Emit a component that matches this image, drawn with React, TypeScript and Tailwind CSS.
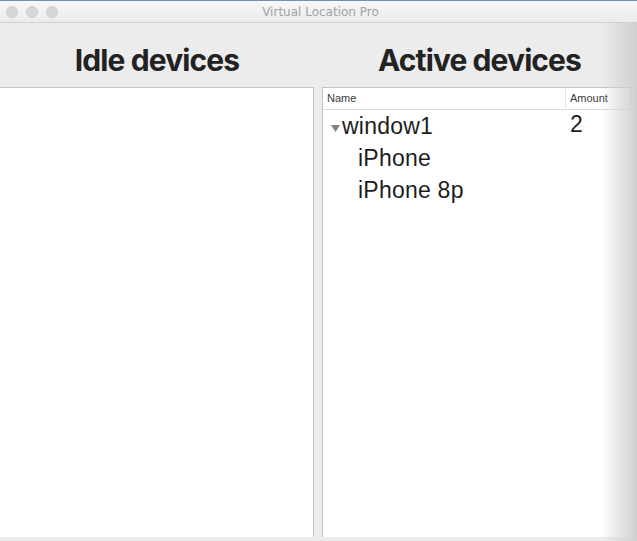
import React from "react"

const rows = [
  { name: "window1", amount: "2", level: 0, open: true },
  { name: "iPhone", amount: "", level: 1 },
  { name: "iPhone 8p", amount: "", level: 1 },
]

function TrafficLight() {
  return <span className="h-[12px] w-[12px] rounded-full bg-[#d6d6d6] border border-[#cdcdcd]" />
}

export default function App() {
  return (
    <div className="relative w-[637px] h-[541px] overflow-hidden bg-[#ececec] font-['Inter',sans-serif]">
      {/* title bar */}
      <div className="relative h-[23px] border-t border-[#7d8fa6] border-b border-b-[#d1d1d1] bg-gradient-to-b from-[#f7f7f7] to-[#ebebeb] flex items-center">
        <div className="flex items-center gap-[8px] pl-[6px]">
          <TrafficLight />
          <TrafficLight />
          <TrafficLight />
        </div>
        <div className="absolute inset-x-0 text-center text-[12px] text-[#a3a3a3] font-['DejaVu_Sans',sans-serif] pl-[4px]">
          Virtual Location Pro
        </div>
      </div>

      <div className="flex h-[514px]">
        {/* idle */}
        <div className="w-[314px] flex flex-col">
          <div className="h-[64px] flex items-center justify-center pt-[10px]">
            <h2 className="text-[30px] font-bold tracking-[-0.03em] text-[#222]">Idle devices</h2>
          </div>
          <div className="h-[450px] bg-white border-t border-r border-[#c3c3c3]" />
        </div>

        <div className="w-[8px]" />

        {/* active */}
        <div className="flex-1 flex flex-col">
          <div className="h-[64px] flex items-center justify-center pt-[10px]">
            <h2 className="text-[30px] font-bold tracking-[-0.03em] text-[#222]">Active devices</h2>
          </div>
          <div className="h-[450px] bg-white border-t border-l border-[#c3c3c3] font-['Liberation_Sans',sans-serif]">
            <div className="flex h-[22px] border-b border-[#dcdcdc] text-[11px] text-[#3a3a3a]">
              <div className="w-[243px] flex items-center pl-[4px] border-r border-[#e2e2e2]">Name</div>
              <div className="w-[66px] flex items-center pl-[4px] border-r border-[#e2e2e2]">Amount</div>
            </div>
            <div className="pt-[3px]">
              {rows.map((r) => (
                <div key={r.name} className="flex h-[32px] text-[23px] text-[#1d1d1d]">
                  <div className={`w-[244px] flex items-start ${r.level ? "pl-[35px]" : "pl-[8px]"}`}>
                    {r.open && (
                      <svg width="9" height="7" viewBox="0 0 9 7" className="mt-[12px] mr-[2px] shrink-0">
                        <path d="M0 0 L9 0 L4.5 7 Z" fill="#808080" />
                      </svg>
                    )}
                    <span className="leading-[32px] -mt-[3px] tracking-[0.01em]">{r.name}</span>
                  </div>
                  <div className="pl-[3px] leading-[32px] -mt-[5px]">{r.amount}</div>
                </div>
              ))}
            </div>
          </div>
        </div>
      </div>

      {/* window shadow at right edge */}
      <div className="absolute top-[22px] bottom-0 right-0 w-[36px] bg-gradient-to-r from-transparent to-[#cfcfcf]" />
    </div>
  )
}
